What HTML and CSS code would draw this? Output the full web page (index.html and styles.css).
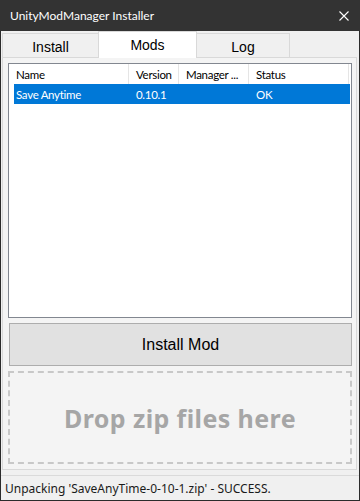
FILE: index.html
```html
<!DOCTYPE html>
<html lang="en">

<head>
    <meta charset="UTF-8">
    <meta name="viewport" content="width=device-width, initial-scale=1.0">
    <title>UnityModManager Installer</title>
    <link rel="stylesheet" href="styles.css">
</head>

<body>
    <div class="window">
        <!-- Title Bar -->
        <div class="title-bar">
            <span class="title-text">UnityModManager Installer</span>
            <svg class="close-icon" width="10" height="10" viewBox="0 0 10 10">
                <path d="M0.5 0.5 L9.5 9.5 M9.5 0.5 L0.5 9.5" stroke="#ffffff" stroke-width="1.1" fill="none" />
            </svg>
        </div>

        <!-- Tabs -->
        <div class="tab-row">
            <div class="tab">Install</div>
            <div class="tab active">Mods</div>
            <div class="tab">Log</div>
        </div>

        <div class="tab-panel">
            <!-- Mods List -->
            <div class="list-view">
                <div class="list-header">
                    <div class="col col-name">Name</div>
                    <div class="col col-version">Version</div>
                    <div class="col col-manager">Manager ...</div>
                    <div class="col col-status">Status</div>
                </div>
                <div class="list-row selected">
                    <div class="col col-name">Save Anytime</div>
                    <div class="col col-version">0.10.1</div>
                    <div class="col col-manager"></div>
                    <div class="col col-status">OK</div>
                </div>
            </div>

            <button class="install-button">Install Mod</button>

            <div class="drop-zone">Drop zip files here</div>
        </div>

        <!-- Status Strip -->
        <div class="status-bar">Unpacking 'SaveAnyTime-0-10-1.zip' - SUCCESS.</div>
    </div>
</body>

</html>
```

FILE: styles.css
```css
/* Base Styles */
body {
    margin: 0;
    padding: 0;
    background-color: #f0f0f0;
    font-family: 'Noto Sans', sans-serif;
}

.window {
    width: 360px;
    height: 501px;
    box-sizing: border-box;
    border: 1px solid #2b2b2b;
    border-top: none;
    background-color: #f0f0f0;
    display: flex;
    flex-direction: column;
}

.title-bar {
    height: 31px;
    margin: 0 -1px;
    background-color: #333333;
    display: flex;
    align-items: center;
    justify-content: space-between;
    padding: 0 10px;
    flex-shrink: 0;
}

.title-text {
    color: #ffffff;
    font-family: 'Lato', sans-serif;
    font-size: 12px;
}

.close-icon {
    margin-right: 1px;
}

/* Tabs */
.tab-row {
    height: 26px;
    display: flex;
    align-items: flex-end;
    padding-left: 1px;
    flex-shrink: 0;
}

.tab {
    height: 24px;
    box-sizing: border-box;
    border: 1px solid #d9d9d9;
    border-bottom: none;
    background-color: #f0f0f0;
    font-family: 'Liberation Sans', Arial, sans-serif;
    font-size: 14px;
    color: #000000;
    display: flex;
    align-items: center;
    justify-content: center;
    padding-top: 3px;
}

.tab:nth-child(1) {
    width: 96px;
    border-right: none;
}

.tab:nth-child(2) {
    width: 99px;
}

.tab:nth-child(3) {
    width: 93px;
    border-left: none;
}

.tab.active {
    height: 27px;
    margin-bottom: -1px;
    background-color: #ffffff;
    padding-top: 0;
    position: relative;
    z-index: 1;
    border-color: #d9d9d9;
}

.tab-panel {
    flex: 1;
    margin: 0 2px 0 1px;
    border: 1px solid #d9d9d9;
    background-color: #f4f4f4;
    padding: 5px 4px 5px 5px;
    display: flex;
    flex-direction: column;
}

/* List View */
.list-view {
    height: 255px;
    box-sizing: border-box;
    border: 1px solid #828790;
    background-color: #ffffff;
    font-family: 'Lato', sans-serif;
    font-size: 11.5px;
    letter-spacing: -0.3px;
    flex-shrink: 0;
}

.list-header {
    height: 20px;
    display: flex;
    color: #000000;
}

.list-header .col {
    border-right: 1px solid #e5e5e5;
}

.col {
    box-sizing: border-box;
    padding-left: 7px;
    display: flex;
    align-items: center;
    white-space: nowrap;
}

.col-name {
    width: 120px;
}

.col-version {
    width: 50px;
}

.col-manager {
    width: 70px;
}

.col-status {
    width: 100px;
}

.list-row {
    height: 20px;
    display: flex;
    margin-left: 5px;
    margin-right: 1px;
}

.list-row .col-name {
    width: 115px;
    padding-left: 2px;
}

.list-row.selected {
    background-color: #0078d7;
    color: #ffffff;
}

/* Install Button */
.install-button {
    height: 43px;
    margin: 5px 0 0 1px;
    border: 1px solid #adadad;
    background-color: #e1e1e1;
    font-family: 'Liberation Sans', Arial, sans-serif;
    font-size: 16px;
    color: #000000;
    flex-shrink: 0;
}

/* Drop Zone */
.drop-zone {
    height: 93px;
    margin-top: 5px;
    box-sizing: border-box;
    border: 2px dashed #c8c8c8;
    background-color: #f4f4f4;
    display: flex;
    align-items: center;
    justify-content: center;
    font-size: 25px;
    letter-spacing: 0.4px;
    font-weight: 700;
    color: #a6a6a6;
    padding-top: 0;
    flex-shrink: 0;
}

/* Status Strip */
.status-bar {
    height: 25px;
    margin-top: 5px;
    border-top: 1px solid #dadada;
    padding-left: 4px;
    font-size: 12px;
    color: #1a1a1a;
    display: flex;
    align-items: center;
    flex-shrink: 0;
}
```
